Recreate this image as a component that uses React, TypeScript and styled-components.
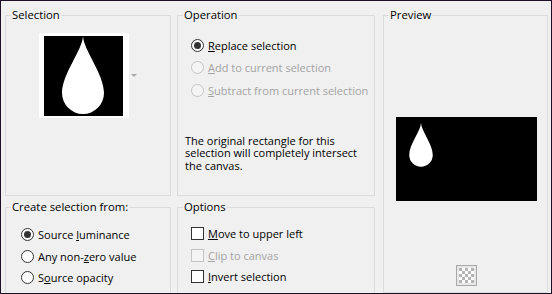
import React from 'react';
import styled, { createGlobalStyle } from 'styled-components';

const Global = createGlobalStyle`
  html, body { margin: 0; padding: 0; background: #f0f0f0; }
  body { font-family: "Open Sans", "Noto Sans", sans-serif; font-size: 11px; color: #000; }
`;

const Window = styled.div`
  box-sizing: border-box;
  width: 552px;
  height: 294px;
  border: 1px solid #1d1128;
  background: #f0f0f0;
  overflow: hidden;
  padding: 6px 3px 0 4px;
  display: grid;
  grid-template-columns: 166px 198px 167px;
  grid-template-rows: 189px 94px;
  column-gap: 6px;
  row-gap: 3px;
`;

const Group = styled.fieldset<{ $open?: boolean; $span?: boolean; $shift?: number }>`
  margin: 0;
  margin-left: ${p => p.$shift ?? 0}px;
  padding: 0;
  min-width: 0;
  border: 1px solid #dcdcdc;
  border-bottom: ${p => (p.$open ? 'none' : '1px solid #dcdcdc')};
  grid-row: ${p => (p.$span ? '1 / span 2' : 'auto')};
  grid-column: ${p => (p.$span ? '3' : 'auto')};
`;

const Legend = styled.legend`
  margin-left: 5px;
  padding: 0 1px;
  line-height: 16px;
  font-size: 11.3px;
`;

const SelectionBody = styled.div`
  display: flex;
  justify-content: center;
  align-items: center;
  gap: 2px;
  padding-top: 10px;
`;

const Thumb = styled.div`
  width: 90px;
  height: 85px;
  background: #fff;
  box-sizing: border-box;
  padding: 3px 6px 2px 5px;
`;

const DropArrow = styled.span`
  width: 0;
  height: 0;
  border-left: 3px solid transparent;
  border-right: 3px solid transparent;
  border-top: 3px solid #a8a8a8;
  margin-top: 0;
`;

const OptionList = styled.div<{ $top: number; $left: number }>`
  display: flex;
  flex-direction: column;
  padding: ${p => p.$top}px 0 0 ${p => p.$left}px;
`;

const OptionRow = styled.label<{ $h: number; $disabled?: boolean }>`
  display: flex;
  align-items: center;
  gap: 4px;
  height: ${p => p.$h}px;
  color: ${p => (p.$disabled ? '#a3a3a3' : '#000')};
  white-space: nowrap;
`;

const RadioCircle = styled.span<{ $checked?: boolean; $disabled?: boolean }>`
  width: 13px;
  height: 13px;
  box-sizing: border-box;
  border-radius: 50%;
  border: 1px solid ${p => (p.$disabled ? '#c4c4c4' : '#333')};
  background: ${p => (p.$disabled ? '#f4f4f4' : '#fff')};
  display: flex;
  align-items: center;
  justify-content: center;
  flex: none;
  &::after {
    content: '';
    width: 7px;
    height: 7px;
    border-radius: 50%;
    background: #333;
    display: ${p => (p.$checked ? 'block' : 'none')};
  }
`;

const CheckBox = styled.span<{ $disabled?: boolean }>`
  width: 13px;
  height: 13px;
  box-sizing: border-box;
  border: 1px solid ${p => (p.$disabled ? '#c4c4c4' : '#333')};
  background: ${p => (p.$disabled ? '#f4f4f4' : '#fff')};
  flex: none;
`;

const Note = styled.p`
  margin: 0;
  padding: 33px 8px 0 7px;
  line-height: 12.5px;
`;

const PreviewBody = styled.div`
  display: flex;
  flex-direction: column;
  align-items: center;
  padding: 94px 0 0 2px;
`;

const PreviewImage = styled.svg`
  display: block;
  width: 141px;
  height: 84px;
`;

const Checker = styled.svg`
  display: block;
  width: 21px;
  height: 21px;
  margin-top: 64px;
`;

const DROP = 'M40 0 C40.5 14 61 38 61 57 A21 21 0 0 1 19 57 C19 38 39.5 14 40 0 Z';

const Thumbnail = () => (
  <Thumb>
    <svg width="79" height="80" viewBox="0 0 79 80" style={{ display: 'block' }}>
      <rect width="79" height="80" fill="#000" />
      <path d={DROP} transform="translate(-1,0)" fill="#fff" />
    </svg>
  </Thumb>
);

type Opt = { label: React.ReactNode; checked?: boolean; disabled?: boolean };

const Radios = ({ items, h, top, left }: { items: Opt[]; h: number; top: number; left: number }) => (
  <OptionList $top={top} $left={left}>
    {items.map((it, i) => (
      <OptionRow key={i} $h={h} $disabled={it.disabled}>
        <RadioCircle $checked={it.checked} $disabled={it.disabled} />
        <span>{it.label}</span>
      </OptionRow>
    ))}
  </OptionList>
);

const Checks = ({ items, h, top, left }: { items: Opt[]; h: number; top: number; left: number }) => (
  <OptionList $top={top} $left={left}>
    {items.map((it, i) => (
      <OptionRow key={i} $h={h} $disabled={it.disabled}>
        <CheckBox $disabled={it.disabled} />
        <span>{it.label}</span>
      </OptionRow>
    ))}
  </OptionList>
);

export default function App() {
  return (
    <>
      <Global />
      <Window>
        <Group>
          <Legend>Selection</Legend>
          <SelectionBody>
            <Thumbnail />
            <DropArrow />
          </SelectionBody>
        </Group>
        <Group>
          <Legend>Operation</Legend>
          <Radios
            top={11}
            left={13}
            h={22.5}
            items={[
              { label: <><u>R</u>eplace selection</>, checked: true },
              { label: <><u>A</u>dd to current selection</>, disabled: true },
              { label: <><u>S</u>ubtract from current selection</>, disabled: true },
            ]}
          />
          <Note>
            The original rectangle for this selection will completely intersect the canvas.
          </Note>
        </Group>
        <Group $span $shift={2}>
          <Legend>Preview</Legend>
          <PreviewBody>
            <PreviewImage viewBox="0 0 141 84">
              <rect width="141" height="84" fill="#000" />
              <path d={DROP} transform="translate(2.6,6) scale(0.56)" fill="#fff" />
            </PreviewImage>
            <Checker viewBox="0 0 21 21">
              <defs>
                <pattern id="chk" width="6" height="6" patternUnits="userSpaceOnUse" x="3" y="3">
                  <rect width="6" height="6" fill="#fff" />
                  <rect width="3" height="3" fill="#b4b4b4" />
                  <rect x="3" y="3" width="3" height="3" fill="#b4b4b4" />
                </pattern>
              </defs>
              <rect x="0.5" y="0.5" width="20" height="20" fill="#e8e8e8" stroke="#a8a8a8" />
              <rect x="3" y="3" width="15" height="15" fill="url(#chk)" />
            </Checker>
          </PreviewBody>
        </Group>
        <Group $open>
          <Legend>Create selection from:</Legend>
          <Radios
            top={9}
            left={15}
            h={21.5}
            items={[
              { label: <>Source <u>l</u>uminance</>, checked: true },
              { label: <>Any non-<u>z</u>ero value</> },
              { label: <>S<u>o</u>urce opacity</> },
            ]}
          />
        </Group>
        <Group $open>
          <Legend>Options</Legend>
          <Checks
            top={8}
            left={13}
            h={21.5}
            items={[
              { label: <><u>M</u>ove to upper left</> },
              { label: <><u>C</u>lip to canvas</>, disabled: true },
              { label: <><u>I</u>nvert selection</> },
            ]}
          />
        </Group>
      </Window>
    </>
  );
}
